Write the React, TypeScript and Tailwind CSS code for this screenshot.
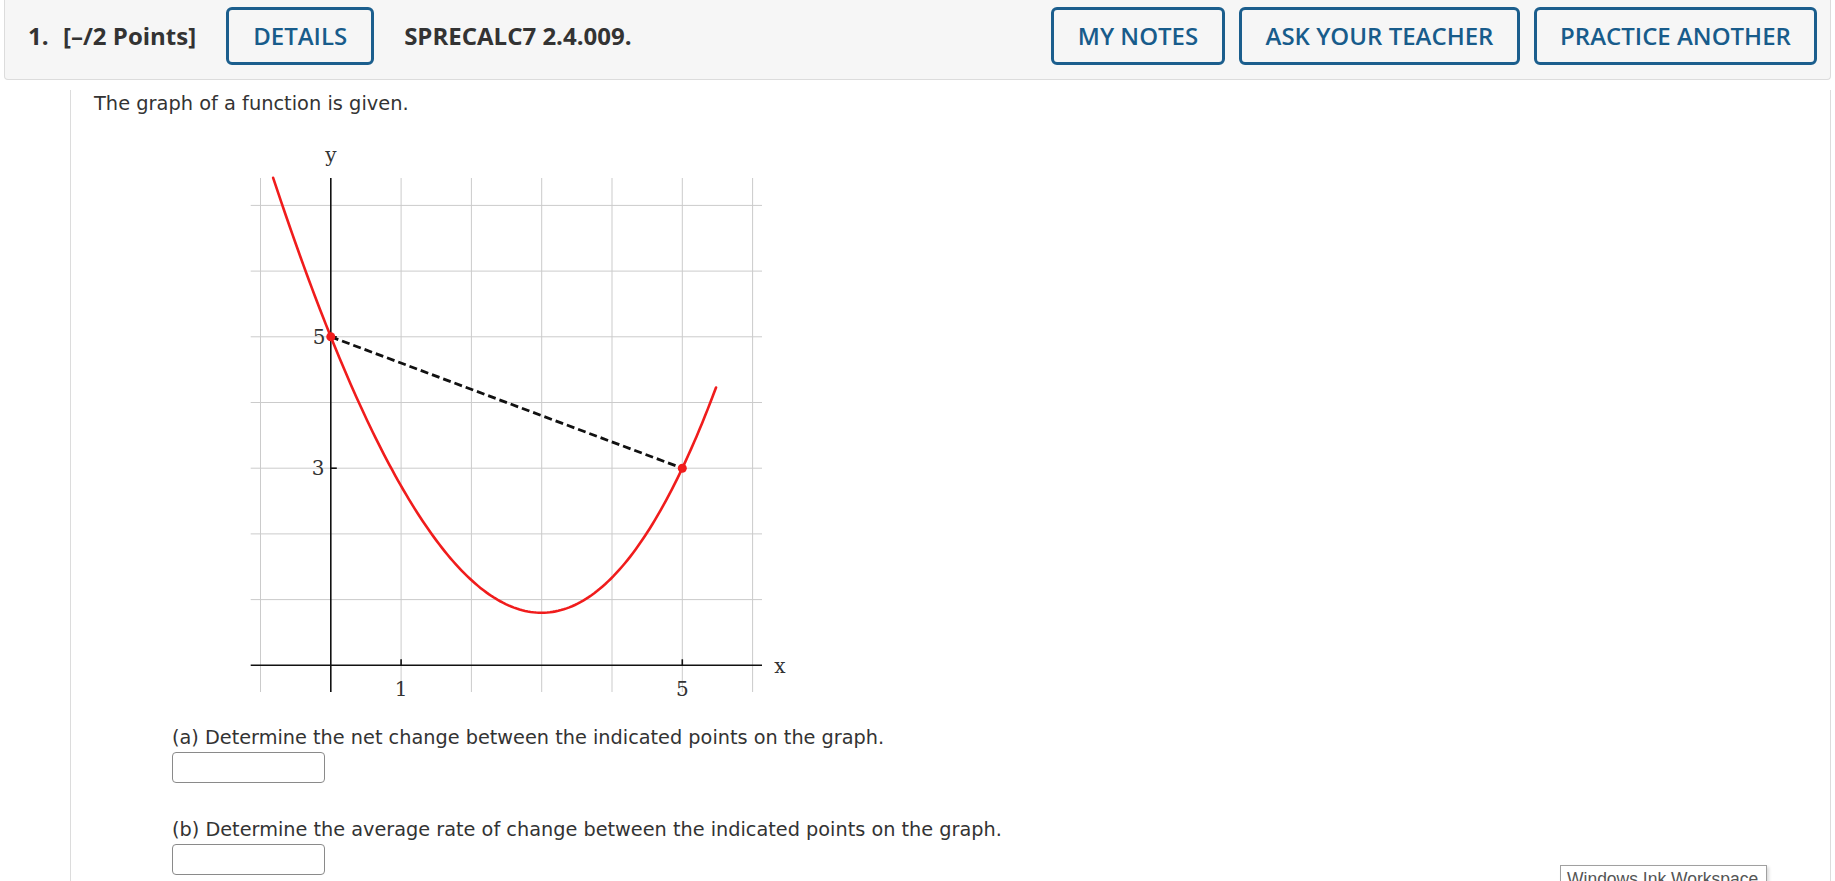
import React from "react";

const ux = 70.3;
const uy = 65.7;
const ox = 90.8;
const oy = 525.3;

const px = (x: number) => ox + x * ux;
const py = (y: number) => oy - y * uy;

const f = (x: number) => 5 - 2.658 * x + 0.3709 * x * x + 0.01614 * x * x * x;

const curvePath = () => {
  const pts: string[] = [];
  for (let i = 0; i <= 160; i++) {
    const x = -0.82 + (i / 160) * (5.48 + 0.82);
    pts.push(`${i === 0 ? "M" : "L"}${px(x).toFixed(2)},${py(f(x)).toFixed(2)}`);
  }
  return pts.join(" ");
};

const Graph = () => {
  const xs = [-1, 1, 2, 3, 4, 5, 6];
  const ys = [1, 2, 3, 4, 5, 6, 7];
  return (
    <svg width="570" height="560" viewBox="0 0 570 560" className="ml-[146px] mt-[22px] block">
      {xs.map((k) => (
        <line key={"v" + k} x1={px(k)} y1={38} x2={px(k)} y2={552} stroke="#cbcbcb" strokeWidth={1} />
      ))}
      {ys.map((k) => (
        <line key={"h" + k} x1={10.7} y1={py(k)} x2={522} y2={py(k)} stroke="#cbcbcb" strokeWidth={1} />
      ))}
      <line x1={10.7} y1={oy} x2={522} y2={oy} stroke="#111" strokeWidth={1.6} />
      <line x1={ox} y1={38} x2={ox} y2={552} stroke="#111" strokeWidth={1.6} />
      <line x1={px(1)} y1={oy} x2={px(1)} y2={oy - 6} stroke="#111" strokeWidth={1.6} />
      <line x1={px(5)} y1={oy} x2={px(5)} y2={oy - 6} stroke="#111" strokeWidth={1.6} />
      <line x1={ox} y1={py(3)} x2={ox + 6} y2={py(3)} stroke="#111" strokeWidth={1.6} />
      <line x1={ox} y1={py(5)} x2={ox + 6} y2={py(5)} stroke="#111" strokeWidth={1.6} />

      <g fontFamily="'DejaVu Serif', serif" fontSize={20} fill="#333" textAnchor="middle">
        <text x={91} y={22}>y</text>
        <text x={540} y={533}>x</text>
        <text x={px(1)} y={556}>1</text>
        <text x={px(5)} y={556}>5</text>
        <text x={79} y={py(5) + 7}>5</text>
        <text x={78} y={py(3) + 7}>3</text>
      </g>

      <path d={curvePath()} fill="none" stroke="#f01c1c" strokeWidth={2.6} strokeLinecap="round" />
      <line
        x1={px(0)}
        y1={py(5)}
        x2={px(5)}
        y2={py(3)}
        stroke="#111"
        strokeWidth={2.8}
        strokeDasharray="8 4"
      />
      <circle cx={px(0)} cy={py(5)} r={4.5} fill="#f01c1c" />
      <circle cx={px(5)} cy={py(3)} r={4.5} fill="#f01c1c" />
    </svg>
  );
};

const OutlineButton = ({ label, w }: { label: string; w: string }) => (
  <div
    className={`${w} h-[58px] flex items-center justify-center rounded-[6px] border-[3px] border-[#1b5e8d] text-[#185c8b] text-[24px] font-semibold`}
  >
    {label}
  </div>
);

export default function App() {
  return (
    <div className="relative w-full h-[881px] overflow-hidden bg-white text-[#333] font-['DejaVu_Sans',sans-serif]">
      <div className="ml-[4px] w-[1827px] h-[80px] bg-[#f6f6f6] border-x border-b border-[#dcdcdc] rounded-b-[4px] flex items-start pt-[7px] pl-[23px] pr-[13px] font-['Open_Sans',sans-serif]">
        <div className="h-[58px] flex items-center text-[24px] font-bold text-[#333] w-[35px]">1.</div>
        <div className="h-[58px] flex items-center text-[24px] font-bold text-[#333]">[–/2 Points]</div>
        <div className="ml-[30px]">
          <OutlineButton label="DETAILS" w="w-[148px]" />
        </div>
        <div className="ml-[30px] h-[58px] flex items-center text-[24px] font-bold text-[#333]">
          SPRECALC7 2.4.009.
        </div>
        <div className="ml-auto flex gap-[14px]">
          <OutlineButton label="MY NOTES" w="w-[174px]" />
          <OutlineButton label="ASK YOUR TEACHER" w="w-[281px]" />
          <OutlineButton label="PRACTICE ANOTHER" w="w-[283px]" />
        </div>
      </div>

      <div className="ml-[70px] w-[1761px] h-[801px] border-x border-[#dcdcdc] pl-[23px]">
        <p className="mt-[10px] text-[19.4px] leading-[28px]">The graph of a function is given.</p>

        <Graph />

        <div className="ml-[78px]">
          <p className="mt-[24px] text-[19.3px] leading-[28px]">
            (a) Determine the net change between the indicated points on the graph.
          </p>
          <input
            type="text"
            className="block w-[153px] h-[31px] border border-[#8a8a8a] rounded-[4px] bg-white outline-none"
          />
          <p className="mt-[33px] text-[19.3px] leading-[28px]">
            (b) Determine the average rate of change between the indicated points on the graph.
          </p>
          <input
            type="text"
            className="block w-[153px] h-[31px] border border-[#8a8a8a] rounded-[4px] bg-white outline-none"
          />
        </div>
      </div>

      <div className="absolute left-[1560px] top-[865px] w-[207px] h-[30px] bg-white border border-[#a0a0a0] px-[6px] pt-[1px] text-[17.5px] leading-[24px] text-[#555] font-['Liberation_Sans',sans-serif] shadow-[2px_2px_3px_rgba(0,0,0,0.15)]">
        Windows Ink Workspace
      </div>
    </div>
  );
}
